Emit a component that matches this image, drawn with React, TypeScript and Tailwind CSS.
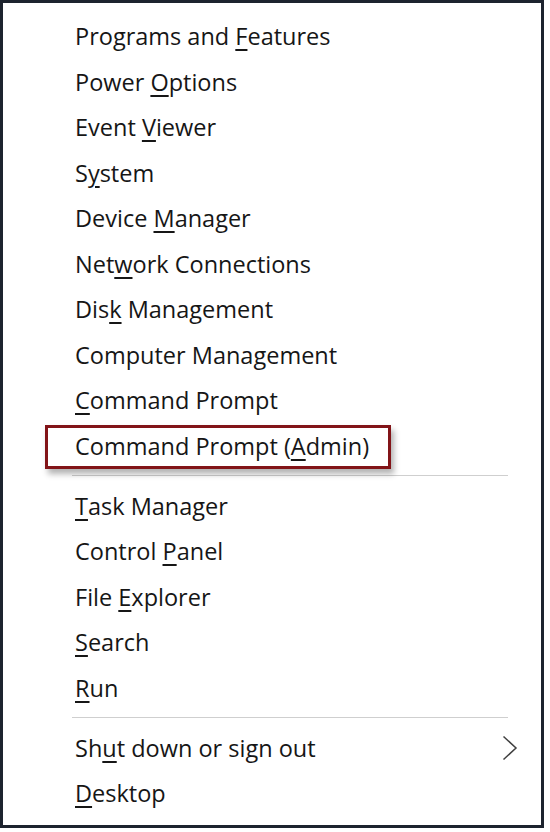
import { FC } from "react";

// Types
interface iMenuItem {
  pre: string;
  key: string;
  post: string;
  boxed?: boolean;
  submenu?: boolean;
}

const groups: iMenuItem[][] = [
  [
    { pre: "Programs and ", key: "F", post: "eatures" },
    { pre: "Power ", key: "O", post: "ptions" },
    { pre: "Event ", key: "V", post: "iewer" },
    { pre: "S", key: "y", post: "stem" },
    { pre: "Device ", key: "M", post: "anager" },
    { pre: "Net", key: "w", post: "ork Connections" },
    { pre: "Dis", key: "k", post: " Management" },
    { pre: "Computer Mana", key: "g", post: "ement" },
    { pre: "", key: "C", post: "ommand Prompt" },
    { pre: "Command Prompt (", key: "A", post: "dmin)", boxed: true },
  ],
  [
    { pre: "", key: "T", post: "ask Manager" },
    { pre: "Control ", key: "P", post: "anel" },
    { pre: "File ", key: "E", post: "xplorer" },
    { pre: "", key: "S", post: "earch" },
    { pre: "", key: "R", post: "un" },
  ],
  [
    { pre: "Sh", key: "u", post: "t down or sign out", submenu: true },
    { pre: "", key: "D", post: "esktop" },
  ],
];

const Chevron: FC = () => (
  <svg width="16" height="26" viewBox="0 0 16 26" fill="none">
    <path d="M1.5 1.5 L14 13 L1.5 24.5" stroke="#404040" strokeWidth="1.5" />
  </svg>
);

const Row: FC<{ item: iMenuItem }> = ({ item }) => (
  <div className="relative flex h-[45.5px] items-center justify-between pl-[72px] pr-[23px]">
    {/* red highlight frame drawn over the row */}
    {item.boxed && (
      <div className="absolute left-[42px] top-[1px] h-[44px] w-[346px] border-[3px] border-[#821418] shadow-[3px_5px_6px_rgba(0,0,0,0.3)]" />
    )}
    <span className="relative whitespace-pre">
      {item.pre}
      <span className="underline decoration-[1.5px] underline-offset-[4px]">{item.key}</span>
      {item.post}
    </span>
    {item.submenu && <Chevron />}
  </div>
);

const Separator: FC = () => (
  <div className="ml-[69px] mr-[33px] mt-[6px] mb-[7.5px] h-px bg-[#cfcfcf]" />
);

export default function App() {
  return (
    <div className="h-[832px] w-[550px] bg-white">
      <div
        className="h-[828px] w-[544px] border-[3px] border-[#1d232e] bg-white pt-[11px] text-[23.5px] leading-none text-[#161616]"
        style={{ fontFamily: '"Open Sans", "Noto Sans", sans-serif' }}
      >
        {groups.map((g, gi) => (
          <div key={`g_${gi}`}>
            {gi > 0 && <Separator />}
            {g.map((item, i) => (
              <Row key={`r_${gi}_${i}`} item={item} />
            ))}
          </div>
        ))}
      </div>
    </div>
  );
}
